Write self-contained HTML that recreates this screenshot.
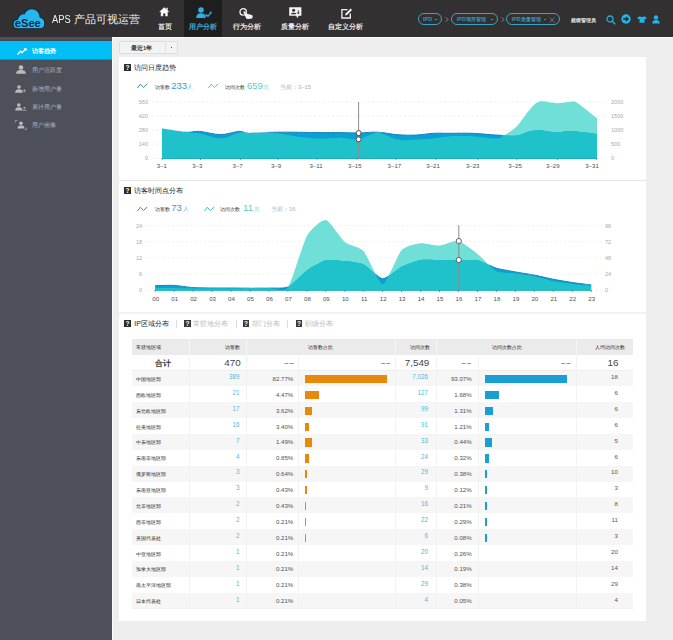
<!DOCTYPE html>
<html><head><meta charset="utf-8">
<style>
*{margin:0;padding:0;box-sizing:border-box}
html,body{width:673px;height:640px;overflow:hidden;background:#eeeeee;font-family:"Liberation Sans",sans-serif}
.abs{position:absolute}
#hdr{position:absolute;left:0;top:0;width:673px;height:36.7px;background:#323031}
#side{position:absolute;left:0;top:36.7px;width:112px;height:604px;background:#4d5058}
#mainbg{position:absolute;left:112px;top:36.7px;width:561px;height:604px;background:#eeeeee;border-left:1px solid #fafafa;border-top:1px solid #fafafa}
#panel{position:absolute;left:119px;top:57.3px;width:527px;height:563.7px;background:#fff}
.nav{position:absolute;top:0;height:36.7px;color:#e8e8e8;font-size:7px;text-align:center;font-weight:bold}
.nav .lb{position:absolute;left:0;right:0;top:22.5px;line-height:8px;white-space:nowrap}
.nav svg{position:absolute}
.pill{position:absolute;top:12.8px;height:12.3px;border:1.2px solid #3aa4c4;border-radius:7px;color:#3596b8;font-size:5.4px;line-height:9.7px;white-space:nowrap;font-weight:bold}
.dot{position:absolute;top:5px;width:1.6px;height:1.3px;background:#3a9cbc}
.si{position:absolute;left:0;width:112px;height:19px;color:#b4b6bb;font-size:6.3px;line-height:19px}
.si .t{position:absolute;left:32px;top:0}
.si svg{position:absolute}
.ttl{position:absolute;font-size:7px;color:#1e1e1e;line-height:9px;white-space:nowrap}
.qi{position:absolute;width:6.8px;height:6.8px;background:#2b2b2b;color:#fff;font-size:6.6px;font-weight:bold;line-height:7px;text-align:center}
.leg{position:absolute;font-size:5.2px;color:#333;white-space:nowrap;line-height:8px}
.big{position:absolute;font-size:9.5px;white-space:nowrap;line-height:10px}
.ax{position:absolute;font-size:5.6px;color:#aaaaaa;line-height:8px;white-space:nowrap}
.xl{position:absolute;font-size:6.1px;color:#505050;line-height:8px;white-space:nowrap}
.th{position:absolute;font-size:5.4px;color:#222;white-space:nowrap}
.tt{position:absolute;font-size:9.8px;color:#444;white-space:nowrap}
.tt.dash{font-size:7.2px;color:#333;letter-spacing:1.4px}
.tt.b{font-size:8.2px;color:#3a3a3a;font-weight:bold}
.td{position:absolute;font-size:5.35px;color:#1a1a1a;white-space:nowrap}
.tn{position:absolute;font-size:6.3px;color:#55b6da;white-space:nowrap}
.tp{position:absolute;font-size:6.1px;color:#505050;white-space:nowrap}
.ta{position:absolute;font-size:6.1px;color:#555;white-space:nowrap}
.tab{position:absolute;font-size:7px;line-height:9px;white-space:nowrap}
</style></head><body>
<div id="hdr">
  <!-- logo -->
  <svg class="abs" style="left:12px;top:8px" width="34" height="23" viewBox="0 0 34 23">
    <path d="M5.6,20.8 C2.8,20.8 1,18.6 1,16.2 C1,13.4 3,11.4 5.6,11.2 C6.2,7.6 9,5.6 12.4,5.6 C13.8,2.4 16.6,0.7 19.8,0.7 C24.6,0.7 28,4.2 28.2,9.2 C31,9.8 32.8,12.4 32.8,15.4 C32.8,18.6 30.6,20.8 27.6,20.8 Z" fill="#26b7ef" stroke="#10283c" stroke-width="1.1"/>
    <text x="15.8" y="18.6" text-anchor="middle" font-family="Liberation Sans" font-size="10.6" font-weight="bold" fill="#0f2c48" textLength="26" lengthAdjust="spacingAndGlyphs">eSee</text>
  </svg>
  <div class="abs" style="left:52.2px;top:12.5px;font-size:11px;line-height:12px;color:#f2f2f2;white-space:nowrap"><span style="display:inline-block;transform:scaleX(0.85);transform-origin:left;width:19px">APS</span> <span style="position:absolute;left:21.8px;top:0.3px;font-size:10.6px">产品可视运营</span></div>

  <div class="nav" style="left:152.5px;width:24px">
    <svg style="left:6.8px;top:7.4px" width="10.5" height="9.5" viewBox="0 0 10.5 9.5"><path d="M5.2,0.2 L10.3,5 L8.7,5 L8.7,9.3 L6.3,9.3 L6.3,6.5 L4.2,6.5 L4.2,9.3 L1.8,9.3 L1.8,5 L0.2,5 Z M7.3,0.8 L8.7,0.8 L8.7,3.4 L7.3,2.1 Z" fill="#f6f6f6"/></svg>
    <div class="lb">首页</div>
  </div>
  <div class="nav" style="left:184px;width:38px;background:#1e1e1e;color:#33aee0">
    <svg style="left:12px;top:7.4px" width="16" height="12" viewBox="0 0 16 12"><circle cx="5" cy="3" r="2.8" fill="#33aee0"/><path d="M0.3,11 C0.3,7.5 2.3,6.3 5,6.3 C7.2,6.3 8.5,7 9.2,8 L7.5,11 Z" fill="#33aee0"/><path d="M8,11 L10.5,8 L12,9.3 L14.8,5.8" stroke="#33aee0" stroke-width="1.3" fill="none"/><path d="M13.2,5 L15.6,4.6 L15.3,7 Z" fill="#33aee0"/></svg>
    <div class="lb">用户分析</div>
  </div>
  <div class="nav" style="left:228.4px;width:38px">
    <svg style="left:10.3px;top:7.8px" width="16" height="11" viewBox="0 0 16 11"><circle cx="4.2" cy="3.9" r="3.2" stroke="#f2f2f2" stroke-width="1.3" fill="none"/><path d="M4.6,3.6 C5.2,3 6,3.2 6.3,3.9 L7.6,6 C8.4,5.6 9.2,5.7 9.6,6.3 C10.4,6 11.2,6.2 11.5,6.8 C12.5,6.6 13.5,7.2 13.7,8.2 C13.9,9.3 13.2,10.6 12,10.8 L8.5,10.9 C7.8,10.9 7.3,10.6 7,10 L4.5,4.6 C4.3,4.2 4.3,3.9 4.6,3.6 Z" fill="#f2f2f2"/></svg>
    <div class="lb">行为分析</div>
  </div>
  <div class="nav" style="left:276px;width:38px">
    <svg style="left:12.8px;top:7.4px" width="13" height="12" viewBox="0 0 13 12"><path d="M0.2,0.2 L12.4,0.2 L12.4,8.8 L9.6,8.8 L8.4,11.2 L7.2,8.8 L0.2,8.8 Z" fill="#f4f4f4"/><circle cx="4.6" cy="3.3" r="1.5" fill="#323031"/><path d="M2,7.2 C2,5.3 7.2,5.3 7.2,7.2 Z" fill="#323031"/><path d="M9.3,3.3 L9.3,6.8 M8,5.6 L9.3,6.9 L10.6,5.6" stroke="#323031" stroke-width="0.9" fill="none"/></svg>
    <div class="lb">质量分析</div>
  </div>
  <div class="nav" style="left:327.5px;width:36px">
    <svg style="left:13px;top:8px" width="12" height="11" viewBox="0 0 12 11"><path d="M6.5,1.6 L0.9,1.6 L0.9,10 L9.3,10 L9.3,5.5" stroke="#f4f4f4" stroke-width="1.3" fill="none"/><path d="M4,7.4 L4.6,5.6 L9.6,0.6 L11,2 L6,7 Z" fill="#f4f4f4"/></svg>
    <div class="lb">自定义分析</div>
  </div>

  <div class="pill" style="left:417.9px;width:24.2px;"><span style="position:absolute;left:4.2px;top:1px">IPD</span><span class="dot" style="left:16.6px"></span></div>
  <svg class="abs" style="left:444.5px;top:17px" width="4" height="5" viewBox="0 0 4 5"><path d="M0.5,0.3 L3.3,2.5 L0.5,4.7" stroke="#8c8c8c" stroke-width="0.8" fill="none"/></svg>
  <div class="pill" style="left:451.3px;width:47px;"><span style="position:absolute;left:4.5px;top:1px">IPD项目管理</span><span class="dot" style="left:39px"></span></div>
  <svg class="abs" style="left:500.6px;top:17px" width="4" height="5" viewBox="0 0 4 5"><path d="M0.5,0.3 L3.3,2.5 L0.5,4.7" stroke="#8c8c8c" stroke-width="0.8" fill="none"/></svg>
  <div class="pill" style="left:506.2px;width:54.2px;"><span style="position:absolute;left:4.5px;top:1px">IPD质量管理</span><span class="dot" style="left:37px"></span><svg style="position:absolute;left:42.3px;top:3px" width="6" height="6" viewBox="0 0 6 6"><path d="M0.5,0.5 L5.5,5.5 M5.5,0.5 L0.5,5.5" stroke="#7a949c" stroke-width="0.65"/></svg></div>

  <div class="abs" style="left:571.3px;top:15.5px;font-size:5.2px;line-height:8px;color:#f0f0f0;font-weight:bold;white-space:nowrap">超级管理员</div>
  <svg class="abs" style="left:605.5px;top:14.5px" width="10" height="10" viewBox="0 0 10 10"><circle cx="4" cy="4" r="3" stroke="#2aa9dc" stroke-width="1.3" fill="none"/><path d="M6.2,6.2 L9.3,9.3" stroke="#2aa9dc" stroke-width="1.4"/></svg>
  <svg class="abs" style="left:621.4px;top:13.8px" width="10" height="10" viewBox="0 0 10 10"><circle cx="5" cy="5" r="4.7" fill="#22b4ec"/><path d="M2.2,5 L6,5 M4.8,3 L7,5 L4.8,7" stroke="#1e2b33" stroke-width="1.5" fill="none"/></svg>
  <svg class="abs" style="left:636.8px;top:15.6px" width="10" height="7" viewBox="0 0 10 7"><path d="M0.2,1.8 L3,0.2 L4,1 L6,1 L7,0.2 L9.8,1.8 L8.8,3.2 L7.5,2.8 L7.5,6.8 L2.5,6.8 L2.5,2.8 L1.2,3.2 Z" fill="#22b4ec"/></svg>
  <svg class="abs" style="left:651.8px;top:14.8px" width="8" height="9" viewBox="0 0 8 9"><circle cx="4" cy="2.4" r="2.2" fill="#22b4ec"/><path d="M0.2,8.6 C0.2,5.8 1.8,5 4,5 C6.2,5 7.8,5.8 7.8,8.6 Z" fill="#22b4ec"/></svg>
</div>

<div id="side">
  <div class="abs" style="left:0;top:3.3px;width:112px;height:0.8px;background:#3e4a55"></div>
  <div class="si" style="top:4px;background:#00bff7;color:#fff;height:19.3px">
    <svg style="left:16.5px;top:7.5px" width="10" height="7" viewBox="0 0 10 7"><path d="M0.5,6.5 L3.5,3.3 L5,4.8 L8.2,1.5" stroke="#fff" stroke-width="1.3" fill="none"/><path d="M6.5,0.3 L9.7,0.3 L9.7,3.3 Z" fill="#fff"/></svg>
    <div class="t" style="font-weight:bold">访客趋势</div>
  </div>
  <div class="abs" style="left:0;top:22.8px;width:112px;height:0.7px;background:#1992b8"></div>
  <div class="si" style="top:23.3px">
    <svg style="left:15.5px;top:5px" width="10" height="9" viewBox="0 0 10 9"><circle cx="5" cy="2.5" r="2.3" fill="#b9bbbf"/><path d="M0.2,8.8 C0.2,5.8 2,5 5,5 C8,5 9.8,5.8 9.8,8.8 Z" fill="#b9bbbf"/></svg>
    <div class="t">用户活跃度</div>
  </div>
  <div class="si" style="top:42px">
    <svg style="left:15px;top:6px" width="11" height="8" viewBox="0 0 11 8"><circle cx="4" cy="2" r="1.8" fill="#b9bbbf"/><path d="M0.2,7.8 C0.2,5 1.6,4.2 4,4.2 C6.4,4.2 7.8,5 7.8,7.8 Z" fill="#b9bbbf"/><path d="M9.3,4 L9.3,7.5 M7.8,5.8 L10.8,5.8" stroke="#b9bbbf" stroke-width="0.7"/></svg>
    <div class="t">新增用户量</div>
  </div>
  <div class="si" style="top:60.3px">
    <svg style="left:14.5px;top:6px" width="12" height="8" viewBox="0 0 12 8"><circle cx="3.8" cy="2" r="1.8" fill="#b9bbbf"/><path d="M0.2,7.6 C0.2,5 1.5,4.2 3.8,4.2 C6.1,4.2 7.4,5 7.4,7.6 Z" fill="#b9bbbf"/><rect x="8.6" y="4" width="1.6" height="1.6" fill="#b9bbbf"/><rect x="7.6" y="6.8" width="4" height="0.8" fill="#b9bbbf"/></svg>
    <div class="t">累计用户量</div>
  </div>
  <div class="si" style="top:78.8px">
    <svg style="left:14.5px;top:4.5px" width="12" height="10" viewBox="0 0 12 10"><path d="M0.5,2.5 L0.5,0.5 L2.5,0.5 M9.5,9.5 L11.5,9.5 L11.5,7.5" stroke="#b9bbbf" stroke-width="0.6" fill="none"/><circle cx="6" cy="3.3" r="1.8" fill="#b9bbbf"/><path d="M2.5,8.5 C2.5,6 4,5.5 6,5.5 C8,5.5 9.5,6 9.5,8.5 Z" fill="#b9bbbf"/></svg>
    <div class="t">用户画像</div>
  </div>
</div>

<div id="mainbg"></div>
<!-- dropdown -->
<div class="abs" style="left:119px;top:40.8px;width:59px;height:13.5px;background:#f3f3f3;border:0.8px solid #dedede;border-radius:2px"></div>
<div class="abs" style="left:165.3px;top:41.4px;width:0.8px;height:12.6px;background:#e2e2e2"></div>
<div class="abs" style="left:131px;top:44px;font-size:5.6px;line-height:8px;color:#333;white-space:nowrap;font-weight:bold">最近1年</div>
<div class="abs" style="left:170.8px;top:47.2px;width:1.6px;height:1.2px;background:#555"></div>

<div id="panel"></div>
<div class="abs" style="left:119px;top:180px;width:527px;height:0.8px;background:#e6e6e6"></div>
<div class="abs" style="left:119px;top:312.2px;width:527px;height:1.4px;background:#f1f1f1"></div>

<!-- titles -->
<div class="qi" style="left:124px;top:63.8px">?</div>
<div class="ttl" style="left:134px;top:62.5px">访问日度趋势</div>
<div class="qi" style="left:124px;top:187.2px">?</div>
<div class="ttl" style="left:134px;top:186px">访客时间点分布</div>

<!-- legends chart1 -->
<svg class="abs" style="left:137.3px;top:83px" width="11" height="6" viewBox="0 0 11 6"><path d="M0.5,5 L3.3,1.2 L6.5,4.5 L10.3,0.8" stroke="#3b8db6" stroke-width="1" fill="none"/></svg>
<div class="leg" style="left:154.5px;top:82.7px">访客数</div>
<div class="big" style="left:171.2px;top:80.6px;color:#3f9bc4">233</div>
<div class="leg" style="left:187.4px;top:82.7px;color:#78a6bf;font-size:5.5px">人</div>
<svg class="abs" style="left:207.5px;top:83px" width="11" height="6" viewBox="0 0 11 6"><path d="M0.5,5 L3.3,1.2 L6.5,4.5 L10.3,0.8" stroke="#45c6bd" stroke-width="1" fill="none"/></svg>
<div class="leg" style="left:225px;top:82.7px">访问次数</div>
<div class="big" style="left:247px;top:80.6px;color:#5ccbc2">659</div>
<div class="leg" style="left:263.4px;top:82.7px;color:#7fd0c8;font-size:5.5px">次</div>
<div class="leg" style="left:280px;top:82.6px;color:#b0b0b0;font-size:5.9px">当前：3–15</div>

<!-- legends chart2 -->
<svg class="abs" style="left:137px;top:206px" width="11" height="6" viewBox="0 0 11 6"><path d="M0.5,5 L3.3,1.2 L6.5,4.5 L10.3,0.8" stroke="#3b8db6" stroke-width="1" fill="none"/></svg>
<div class="leg" style="left:154.8px;top:205.4px">访客数</div>
<div class="big" style="left:171.2px;top:203.4px;color:#3f9bc4">73</div>
<div class="leg" style="left:182.8px;top:205.4px;color:#78a6bf;font-size:5.5px">人</div>
<svg class="abs" style="left:203.8px;top:206px" width="11" height="6" viewBox="0 0 11 6"><path d="M0.5,5 L3.3,1.2 L6.5,4.5 L10.3,0.8" stroke="#45c6bd" stroke-width="1" fill="none"/></svg>
<div class="leg" style="left:220.3px;top:205.4px">访问次数</div>
<div class="big" style="left:243.1px;top:203.4px;color:#5ccbc2">11</div>
<div class="leg" style="left:254px;top:205.4px;color:#7fd0c8;font-size:5.5px">次</div>
<div class="leg" style="left:271px;top:205.3px;color:#b0b0b0;font-size:5.9px">当前：16</div>

<svg class="abs" style="left:0;top:0" width="673" height="640" viewBox="0 0 673 640">
<line x1="152" y1="102" x2="607" y2="102" stroke="#ececec" stroke-width="0.9" stroke-dasharray="2,2.5"/><line x1="152" y1="116" x2="607" y2="116" stroke="#ececec" stroke-width="0.9" stroke-dasharray="2,2.5"/><line x1="152" y1="130" x2="607" y2="130" stroke="#ececec" stroke-width="0.9" stroke-dasharray="2,2.5"/><line x1="152" y1="144" x2="607" y2="144" stroke="#ececec" stroke-width="0.9" stroke-dasharray="2,2.5"/><line x1="152" y1="158.5" x2="607" y2="158.5" stroke="#ececec" stroke-width="0.9" stroke-dasharray="2,2.5"/>
<clipPath id="cl1"><path d="M162.0,128.8 C166.0,129.4 179.7,131.9 186.0,132.3 C192.3,132.7 193.8,131.0 199.6,131.4 C205.3,131.8 214.0,134.6 220.5,134.6 C227.0,134.6 233.9,131.7 238.6,131.4 C243.3,131.1 242.5,132.8 248.6,132.9 C254.7,133.0 266.4,132.3 275.0,132.2 C283.6,132.1 292.5,132.2 300.0,132.3 C307.5,132.4 313.3,132.6 320.0,132.6 C326.7,132.6 333.6,132.5 340.0,132.6 C346.4,132.7 352.1,133.1 358.4,133.0 C364.7,132.9 371.4,131.9 378.0,132.2 C384.6,132.5 391.7,134.3 398.0,134.8 C404.3,135.3 410.1,135.3 416.0,135.1 C421.9,134.8 428.0,133.6 433.7,133.3 C439.4,133.0 443.6,133.3 450.0,133.3 C456.4,133.3 464.5,133.0 472.3,133.3 C480.1,133.6 489.4,134.7 496.8,135.1 C504.2,135.5 511.7,136.1 516.9,135.6 C522.1,135.1 524.3,132.7 528.0,131.8 C531.7,130.9 534.2,130.1 539.0,130.2 C543.8,130.3 551.8,132.2 557.0,132.4 C562.2,132.6 563.6,130.8 570.3,131.1 C577.0,131.4 592.5,133.5 597.0,134.0 L597.0,158.5 L162.0,158.5 Z"/></clipPath>
<path d="M162.0,128.8 C166.0,129.4 179.7,131.7 186.0,132.5 C192.3,133.3 193.8,132.4 199.6,133.4 C205.3,134.4 214.0,138.4 220.5,138.3 C227.0,138.2 233.9,133.8 238.6,132.9 C243.3,132.0 242.5,132.8 248.6,132.9 C254.7,133.0 266.4,132.6 275.0,133.3 C283.6,134.0 292.5,136.1 300.0,137.0 C307.5,137.9 313.3,138.5 320.0,138.6 C326.7,138.7 333.6,137.7 340.0,137.8 C346.4,137.9 352.1,139.8 358.4,139.0 C364.7,138.2 371.4,132.8 378.0,132.9 C384.6,133.0 391.7,138.5 398.0,139.6 C404.3,140.7 410.1,139.8 416.0,139.6 C421.9,139.4 428.0,139.1 433.7,138.5 C439.4,137.9 443.6,136.6 450.0,136.2 C456.4,135.8 464.5,135.8 472.3,136.2 C480.1,136.6 491.6,138.6 496.8,138.5 C502.0,138.4 500.1,137.9 503.5,135.8 C506.9,133.8 512.8,130.2 516.9,126.2 C521.0,122.2 524.3,115.8 528.0,111.7 C531.7,107.6 534.2,103.1 539.0,101.7 C543.8,100.3 551.8,103.2 557.0,103.2 C562.2,103.2 567.0,101.8 570.3,101.7 C573.6,101.6 572.5,100.0 577.0,102.8 C581.5,105.6 593.7,115.8 597.0,118.4 L597.0,158.5 L162.0,158.5 Z" fill="#70dfd8"/>
<path d="M162.0,128.8 C166.0,129.4 179.7,131.9 186.0,132.3 C192.3,132.7 193.8,131.0 199.6,131.4 C205.3,131.8 214.0,134.6 220.5,134.6 C227.0,134.6 233.9,131.7 238.6,131.4 C243.3,131.1 242.5,132.8 248.6,132.9 C254.7,133.0 266.4,132.3 275.0,132.2 C283.6,132.1 292.5,132.2 300.0,132.3 C307.5,132.4 313.3,132.6 320.0,132.6 C326.7,132.6 333.6,132.5 340.0,132.6 C346.4,132.7 352.1,133.1 358.4,133.0 C364.7,132.9 371.4,131.9 378.0,132.2 C384.6,132.5 391.7,134.3 398.0,134.8 C404.3,135.3 410.1,135.3 416.0,135.1 C421.9,134.8 428.0,133.6 433.7,133.3 C439.4,133.0 443.6,133.3 450.0,133.3 C456.4,133.3 464.5,133.0 472.3,133.3 C480.1,133.6 489.4,134.7 496.8,135.1 C504.2,135.5 511.7,136.1 516.9,135.6 C522.1,135.1 524.3,132.7 528.0,131.8 C531.7,130.9 534.2,130.1 539.0,130.2 C543.8,130.3 551.8,132.2 557.0,132.4 C562.2,132.6 563.6,130.8 570.3,131.1 C577.0,131.4 592.5,133.5 597.0,134.0 L597.0,158.5 L162.0,158.5 Z" fill="#08a0d6"/>
<path d="M162.0,128.8 C166.0,129.4 179.7,131.7 186.0,132.5 C192.3,133.3 193.8,132.4 199.6,133.4 C205.3,134.4 214.0,138.4 220.5,138.3 C227.0,138.2 233.9,133.8 238.6,132.9 C243.3,132.0 242.5,132.8 248.6,132.9 C254.7,133.0 266.4,132.6 275.0,133.3 C283.6,134.0 292.5,136.1 300.0,137.0 C307.5,137.9 313.3,138.5 320.0,138.6 C326.7,138.7 333.6,137.7 340.0,137.8 C346.4,137.9 352.1,139.8 358.4,139.0 C364.7,138.2 371.4,132.8 378.0,132.9 C384.6,133.0 391.7,138.5 398.0,139.6 C404.3,140.7 410.1,139.8 416.0,139.6 C421.9,139.4 428.0,139.1 433.7,138.5 C439.4,137.9 443.6,136.6 450.0,136.2 C456.4,135.8 464.5,135.8 472.3,136.2 C480.1,136.6 491.6,138.6 496.8,138.5 C502.0,138.4 500.1,137.9 503.5,135.8 C506.9,133.8 512.8,130.2 516.9,126.2 C521.0,122.2 524.3,115.8 528.0,111.7 C531.7,107.6 534.2,103.1 539.0,101.7 C543.8,100.3 551.8,103.2 557.0,103.2 C562.2,103.2 567.0,101.8 570.3,101.7 C573.6,101.6 572.5,100.0 577.0,102.8 C581.5,105.6 593.7,115.8 597.0,118.4 L597.0,158.5 L162.0,158.5 Z" fill="#1fc2cb" clip-path="url(#cl1)"/>
<mask id="mk1"><rect x="0" y="0" width="673" height="640" fill="#fff"/><path d="M162.0,128.8 C166.0,129.4 179.7,131.7 186.0,132.5 C192.3,133.3 193.8,132.4 199.6,133.4 C205.3,134.4 214.0,138.4 220.5,138.3 C227.0,138.2 233.9,133.8 238.6,132.9 C243.3,132.0 242.5,132.8 248.6,132.9 C254.7,133.0 266.4,132.6 275.0,133.3 C283.6,134.0 292.5,136.1 300.0,137.0 C307.5,137.9 313.3,138.5 320.0,138.6 C326.7,138.7 333.6,137.7 340.0,137.8 C346.4,137.9 352.1,139.8 358.4,139.0 C364.7,138.2 371.4,132.8 378.0,132.9 C384.6,133.0 391.7,138.5 398.0,139.6 C404.3,140.7 410.1,139.8 416.0,139.6 C421.9,139.4 428.0,139.1 433.7,138.5 C439.4,137.9 443.6,136.6 450.0,136.2 C456.4,135.8 464.5,135.8 472.3,136.2 C480.1,136.6 491.6,138.6 496.8,138.5 C502.0,138.4 500.1,137.9 503.5,135.8 C506.9,133.8 512.8,130.2 516.9,126.2 C521.0,122.2 524.3,115.8 528.0,111.7 C531.7,107.6 534.2,103.1 539.0,101.7 C543.8,100.3 551.8,103.2 557.0,103.2 C562.2,103.2 567.0,101.8 570.3,101.7 C573.6,101.6 572.5,100.0 577.0,102.8 C581.5,105.6 593.7,115.8 597.0,118.4 L597.0,158.5 L162.0,158.5 Z" fill="#000" transform="translate(0,-0.6)"/></mask>
<path d="M162.0,128.8 C166.0,129.4 179.7,131.9 186.0,132.3 C192.3,132.7 193.8,131.0 199.6,131.4 C205.3,131.8 214.0,134.6 220.5,134.6 C227.0,134.6 233.9,131.7 238.6,131.4 C243.3,131.1 242.5,132.8 248.6,132.9 C254.7,133.0 266.4,132.3 275.0,132.2 C283.6,132.1 292.5,132.2 300.0,132.3 C307.5,132.4 313.3,132.6 320.0,132.6 C326.7,132.6 333.6,132.5 340.0,132.6 C346.4,132.7 352.1,133.1 358.4,133.0 C364.7,132.9 371.4,131.9 378.0,132.2 C384.6,132.5 391.7,134.3 398.0,134.8 C404.3,135.3 410.1,135.3 416.0,135.1 C421.9,134.8 428.0,133.6 433.7,133.3 C439.4,133.0 443.6,133.3 450.0,133.3 C456.4,133.3 464.5,133.0 472.3,133.3 C480.1,133.6 489.4,134.7 496.8,135.1 C504.2,135.5 511.7,136.1 516.9,135.6 C522.1,135.1 524.3,132.7 528.0,131.8 C531.7,130.9 534.2,130.1 539.0,130.2 C543.8,130.3 551.8,132.2 557.0,132.4 C562.2,132.6 563.6,130.8 570.3,131.1 C577.0,131.4 592.5,133.5 597.0,134.0" fill="none" stroke="#1684b8" stroke-width="1" mask="url(#mk1)"/>
<line x1="162" y1="158.5" x2="597" y2="158.5" stroke="#17b4bd" stroke-width="1"/>
<line x1="162.2" y1="158" x2="162.2" y2="160" stroke="#3a8aa0" stroke-width="0.8"/>
<line x1="200.5" y1="158" x2="200.5" y2="160" stroke="#3a8aa0" stroke-width="0.8"/>
<line x1="240.6" y1="158" x2="240.6" y2="160" stroke="#3a8aa0" stroke-width="0.8"/>
<line x1="278" y1="158" x2="278" y2="160" stroke="#3a8aa0" stroke-width="0.8"/>
<line x1="317" y1="158" x2="317" y2="160" stroke="#3a8aa0" stroke-width="0.8"/>
<line x1="357" y1="158" x2="357" y2="160" stroke="#3a8aa0" stroke-width="0.8"/>
<line x1="396" y1="158" x2="396" y2="160" stroke="#3a8aa0" stroke-width="0.8"/>
<line x1="436" y1="158" x2="436" y2="160" stroke="#3a8aa0" stroke-width="0.8"/>
<line x1="477.9" y1="158" x2="477.9" y2="160" stroke="#3a8aa0" stroke-width="0.8"/>
<line x1="516.9" y1="158" x2="516.9" y2="160" stroke="#3a8aa0" stroke-width="0.8"/>
<line x1="557.4" y1="158" x2="557.4" y2="160" stroke="#3a8aa0" stroke-width="0.8"/>
<line x1="596.6" y1="158" x2="596.6" y2="160" stroke="#3a8aa0" stroke-width="0.8"/>
<line x1="358.6" y1="102" x2="358.6" y2="158" stroke="#8e8e8e" stroke-width="1"/>
<circle cx="358.6" cy="133.1" r="2.5" fill="#fff" stroke="#4a4a4a" stroke-width="1"/>
<circle cx="358.6" cy="139.3" r="2.5" fill="#fff" stroke="#4a4a4a" stroke-width="1"/>
<line x1="145.3" y1="225.6" x2="601.5" y2="225.6" stroke="#ececec" stroke-width="0.9" stroke-dasharray="2,2.5"/><line x1="145.3" y1="241.7" x2="601.5" y2="241.7" stroke="#ececec" stroke-width="0.9" stroke-dasharray="2,2.5"/><line x1="145.3" y1="257.8" x2="601.5" y2="257.8" stroke="#ececec" stroke-width="0.9" stroke-dasharray="2,2.5"/><line x1="145.3" y1="273.9" x2="601.5" y2="273.9" stroke="#ececec" stroke-width="0.9" stroke-dasharray="2,2.5"/><line x1="145.3" y1="290.3" x2="601.5" y2="290.3" stroke="#ececec" stroke-width="0.9" stroke-dasharray="2,2.5"/>
<clipPath id="cl2"><path d="M155.2,285.6 C157.1,285.6 170.4,285.2 174.2,285.4 C177.9,285.6 189.3,287.3 193.1,287.6 C196.9,287.9 208.3,288.0 212.1,288.0 C215.9,288.0 227.2,288.0 231.0,288.0 C234.8,288.0 246.2,288.2 250.0,288.2 C253.8,288.2 265.1,288.1 268.9,288.0 C272.7,287.9 284.1,288.8 287.9,287.0 C291.7,285.2 303.1,273.1 306.9,270.4 C310.6,267.7 322.0,261.1 325.8,260.2 C329.6,259.3 341.0,260.7 344.8,261.1 C348.6,261.5 359.9,262.8 363.7,264.6 C367.5,266.4 378.9,278.6 382.7,278.8 C386.5,279.0 397.8,268.7 401.6,266.8 C405.4,264.9 416.8,260.8 420.6,260.1 C424.4,259.4 435.8,260.2 439.5,260.2 C443.3,260.2 454.7,260.2 458.5,260.2 C462.3,260.2 473.7,259.5 477.5,260.3 C481.3,261.1 492.6,267.0 496.4,268.2 C500.2,269.4 511.6,271.2 515.4,271.9 C519.2,272.6 530.5,274.4 534.3,275.1 C538.1,275.8 549.5,278.6 553.3,279.3 C557.1,280.0 568.5,281.9 572.2,282.5 C576.0,283.1 589.3,284.7 591.2,284.9 L591.2,290.3 L155.2,290.3 Z"/></clipPath>
<path d="M155.2,288.1 C157.1,288.1 170.4,288.0 174.2,288.0 C177.9,288.0 189.3,288.4 193.1,288.5 C196.9,288.6 208.3,288.5 212.1,288.5 C215.9,288.5 227.2,288.5 231.0,288.5 C234.8,288.5 246.2,288.5 250.0,288.5 C253.8,288.5 265.1,288.4 268.9,288.3 C272.7,288.2 284.1,292.7 287.9,287.5 C291.7,282.3 303.1,242.7 306.9,235.9 C310.6,229.2 322.0,219.4 325.8,220.0 C329.6,220.6 341.0,238.8 344.8,241.9 C348.6,245.0 359.9,247.0 363.7,251.2 C367.5,255.4 378.9,284.4 382.7,284.3 C386.5,284.2 397.8,254.2 401.6,250.1 C405.4,246.0 416.8,243.6 420.6,243.2 C424.4,242.8 435.8,245.8 439.5,245.6 C443.3,245.4 454.7,240.1 458.5,240.9 C462.3,241.7 473.7,250.9 477.5,253.9 C481.3,256.9 492.6,269.4 496.4,271.3 C500.2,273.2 511.6,272.9 515.4,273.4 C519.2,273.9 530.5,275.4 534.3,276.2 C538.1,277.0 549.5,280.5 553.3,281.3 C557.1,282.1 568.5,283.4 572.2,283.9 C576.0,284.3 589.3,285.6 591.2,285.8 L591.2,290.3 L155.2,290.3 Z" fill="#70dfd8"/>
<path d="M155.2,285.6 C157.1,285.6 170.4,285.2 174.2,285.4 C177.9,285.6 189.3,287.3 193.1,287.6 C196.9,287.9 208.3,288.0 212.1,288.0 C215.9,288.0 227.2,288.0 231.0,288.0 C234.8,288.0 246.2,288.2 250.0,288.2 C253.8,288.2 265.1,288.1 268.9,288.0 C272.7,287.9 284.1,288.8 287.9,287.0 C291.7,285.2 303.1,273.1 306.9,270.4 C310.6,267.7 322.0,261.1 325.8,260.2 C329.6,259.3 341.0,260.7 344.8,261.1 C348.6,261.5 359.9,262.8 363.7,264.6 C367.5,266.4 378.9,278.6 382.7,278.8 C386.5,279.0 397.8,268.7 401.6,266.8 C405.4,264.9 416.8,260.8 420.6,260.1 C424.4,259.4 435.8,260.2 439.5,260.2 C443.3,260.2 454.7,260.2 458.5,260.2 C462.3,260.2 473.7,259.5 477.5,260.3 C481.3,261.1 492.6,267.0 496.4,268.2 C500.2,269.4 511.6,271.2 515.4,271.9 C519.2,272.6 530.5,274.4 534.3,275.1 C538.1,275.8 549.5,278.6 553.3,279.3 C557.1,280.0 568.5,281.9 572.2,282.5 C576.0,283.1 589.3,284.7 591.2,284.9 L591.2,290.3 L155.2,290.3 Z" fill="#08a0d6"/>
<path d="M155.2,288.1 C157.1,288.1 170.4,288.0 174.2,288.0 C177.9,288.0 189.3,288.4 193.1,288.5 C196.9,288.6 208.3,288.5 212.1,288.5 C215.9,288.5 227.2,288.5 231.0,288.5 C234.8,288.5 246.2,288.5 250.0,288.5 C253.8,288.5 265.1,288.4 268.9,288.3 C272.7,288.2 284.1,292.7 287.9,287.5 C291.7,282.3 303.1,242.7 306.9,235.9 C310.6,229.2 322.0,219.4 325.8,220.0 C329.6,220.6 341.0,238.8 344.8,241.9 C348.6,245.0 359.9,247.0 363.7,251.2 C367.5,255.4 378.9,284.4 382.7,284.3 C386.5,284.2 397.8,254.2 401.6,250.1 C405.4,246.0 416.8,243.6 420.6,243.2 C424.4,242.8 435.8,245.8 439.5,245.6 C443.3,245.4 454.7,240.1 458.5,240.9 C462.3,241.7 473.7,250.9 477.5,253.9 C481.3,256.9 492.6,269.4 496.4,271.3 C500.2,273.2 511.6,272.9 515.4,273.4 C519.2,273.9 530.5,275.4 534.3,276.2 C538.1,277.0 549.5,280.5 553.3,281.3 C557.1,282.1 568.5,283.4 572.2,283.9 C576.0,284.3 589.3,285.6 591.2,285.8 L591.2,290.3 L155.2,290.3 Z" fill="#1fc2cb" clip-path="url(#cl2)"/>
<mask id="mk2"><rect x="0" y="0" width="673" height="640" fill="#fff"/><path d="M155.2,288.1 C157.1,288.1 170.4,288.0 174.2,288.0 C177.9,288.0 189.3,288.4 193.1,288.5 C196.9,288.6 208.3,288.5 212.1,288.5 C215.9,288.5 227.2,288.5 231.0,288.5 C234.8,288.5 246.2,288.5 250.0,288.5 C253.8,288.5 265.1,288.4 268.9,288.3 C272.7,288.2 284.1,292.7 287.9,287.5 C291.7,282.3 303.1,242.7 306.9,235.9 C310.6,229.2 322.0,219.4 325.8,220.0 C329.6,220.6 341.0,238.8 344.8,241.9 C348.6,245.0 359.9,247.0 363.7,251.2 C367.5,255.4 378.9,284.4 382.7,284.3 C386.5,284.2 397.8,254.2 401.6,250.1 C405.4,246.0 416.8,243.6 420.6,243.2 C424.4,242.8 435.8,245.8 439.5,245.6 C443.3,245.4 454.7,240.1 458.5,240.9 C462.3,241.7 473.7,250.9 477.5,253.9 C481.3,256.9 492.6,269.4 496.4,271.3 C500.2,273.2 511.6,272.9 515.4,273.4 C519.2,273.9 530.5,275.4 534.3,276.2 C538.1,277.0 549.5,280.5 553.3,281.3 C557.1,282.1 568.5,283.4 572.2,283.9 C576.0,284.3 589.3,285.6 591.2,285.8 L591.2,290.3 L155.2,290.3 Z" fill="#000" transform="translate(0,-0.6)"/></mask>
<path d="M155.2,285.6 C157.1,285.6 170.4,285.2 174.2,285.4 C177.9,285.6 189.3,287.3 193.1,287.6 C196.9,287.9 208.3,288.0 212.1,288.0 C215.9,288.0 227.2,288.0 231.0,288.0 C234.8,288.0 246.2,288.2 250.0,288.2 C253.8,288.2 265.1,288.1 268.9,288.0 C272.7,287.9 284.1,288.8 287.9,287.0 C291.7,285.2 303.1,273.1 306.9,270.4 C310.6,267.7 322.0,261.1 325.8,260.2 C329.6,259.3 341.0,260.7 344.8,261.1 C348.6,261.5 359.9,262.8 363.7,264.6 C367.5,266.4 378.9,278.6 382.7,278.8 C386.5,279.0 397.8,268.7 401.6,266.8 C405.4,264.9 416.8,260.8 420.6,260.1 C424.4,259.4 435.8,260.2 439.5,260.2 C443.3,260.2 454.7,260.2 458.5,260.2 C462.3,260.2 473.7,259.5 477.5,260.3 C481.3,261.1 492.6,267.0 496.4,268.2 C500.2,269.4 511.6,271.2 515.4,271.9 C519.2,272.6 530.5,274.4 534.3,275.1 C538.1,275.8 549.5,278.6 553.3,279.3 C557.1,280.0 568.5,281.9 572.2,282.5 C576.0,283.1 589.3,284.7 591.2,284.9" fill="none" stroke="#1684b8" stroke-width="1" mask="url(#mk2)"/>
<line x1="155.2" y1="290.3" x2="591.2" y2="290.3" stroke="#17b4bd" stroke-width="1"/>
<line x1="155.2" y1="290" x2="155.2" y2="292" stroke="#3a8aa0" stroke-width="0.8"/>
<line x1="174.2" y1="290" x2="174.2" y2="292" stroke="#3a8aa0" stroke-width="0.8"/>
<line x1="193.1" y1="290" x2="193.1" y2="292" stroke="#3a8aa0" stroke-width="0.8"/>
<line x1="212.1" y1="290" x2="212.1" y2="292" stroke="#3a8aa0" stroke-width="0.8"/>
<line x1="231.0" y1="290" x2="231.0" y2="292" stroke="#3a8aa0" stroke-width="0.8"/>
<line x1="250.0" y1="290" x2="250.0" y2="292" stroke="#3a8aa0" stroke-width="0.8"/>
<line x1="268.9" y1="290" x2="268.9" y2="292" stroke="#3a8aa0" stroke-width="0.8"/>
<line x1="287.9" y1="290" x2="287.9" y2="292" stroke="#3a8aa0" stroke-width="0.8"/>
<line x1="306.9" y1="290" x2="306.9" y2="292" stroke="#3a8aa0" stroke-width="0.8"/>
<line x1="325.8" y1="290" x2="325.8" y2="292" stroke="#3a8aa0" stroke-width="0.8"/>
<line x1="344.8" y1="290" x2="344.8" y2="292" stroke="#3a8aa0" stroke-width="0.8"/>
<line x1="363.7" y1="290" x2="363.7" y2="292" stroke="#3a8aa0" stroke-width="0.8"/>
<line x1="382.7" y1="290" x2="382.7" y2="292" stroke="#3a8aa0" stroke-width="0.8"/>
<line x1="401.6" y1="290" x2="401.6" y2="292" stroke="#3a8aa0" stroke-width="0.8"/>
<line x1="420.6" y1="290" x2="420.6" y2="292" stroke="#3a8aa0" stroke-width="0.8"/>
<line x1="439.5" y1="290" x2="439.5" y2="292" stroke="#3a8aa0" stroke-width="0.8"/>
<line x1="458.5" y1="290" x2="458.5" y2="292" stroke="#3a8aa0" stroke-width="0.8"/>
<line x1="477.5" y1="290" x2="477.5" y2="292" stroke="#3a8aa0" stroke-width="0.8"/>
<line x1="496.4" y1="290" x2="496.4" y2="292" stroke="#3a8aa0" stroke-width="0.8"/>
<line x1="515.4" y1="290" x2="515.4" y2="292" stroke="#3a8aa0" stroke-width="0.8"/>
<line x1="534.3" y1="290" x2="534.3" y2="292" stroke="#3a8aa0" stroke-width="0.8"/>
<line x1="553.3" y1="290" x2="553.3" y2="292" stroke="#3a8aa0" stroke-width="0.8"/>
<line x1="572.2" y1="290" x2="572.2" y2="292" stroke="#3a8aa0" stroke-width="0.8"/>
<line x1="591.2" y1="290" x2="591.2" y2="292" stroke="#3a8aa0" stroke-width="0.8"/>
<line x1="458.8" y1="225.2" x2="458.8" y2="290" stroke="#8a8a8a" stroke-width="1"/>
<circle cx="458.8" cy="241" r="2.6" fill="#fff" stroke="#555" stroke-width="0.9"/>
<circle cx="458.8" cy="260" r="2.6" fill="#fff" stroke="#555" stroke-width="0.9"/>
</svg>
<div class="ax" style="left:108.0px;top:98.0px;width:40px;text-align:right">560</div>
<div class="ax" style="left:108.0px;top:112.0px;width:40px;text-align:right">420</div>
<div class="ax" style="left:108.0px;top:126.0px;width:40px;text-align:right">280</div>
<div class="ax" style="left:108.0px;top:140.0px;width:40px;text-align:right">140</div>
<div class="ax" style="left:108.0px;top:154.0px;width:40px;text-align:right">0</div>
<div class="ax" style="left:611.0px;top:98.0px">2000</div>
<div class="ax" style="left:611.0px;top:112.0px">1500</div>
<div class="ax" style="left:611.0px;top:126.0px">1000</div>
<div class="ax" style="left:611.0px;top:140.0px">500</div>
<div class="ax" style="left:611.0px;top:154.0px">0</div>
<div class="xl" style="left:141.9px;top:161.8px;width:40px;text-align:center">3–1</div>
<div class="xl" style="left:177.3px;top:161.8px;width:40px;text-align:center">3–3</div>
<div class="xl" style="left:217.7px;top:161.8px;width:40px;text-align:center">3–7</div>
<div class="xl" style="left:256.0px;top:161.8px;width:40px;text-align:center">3–9</div>
<div class="xl" style="left:296.0px;top:161.8px;width:40px;text-align:center">3–11</div>
<div class="xl" style="left:334.8px;top:161.8px;width:40px;text-align:center">3–15</div>
<div class="xl" style="left:374.4px;top:161.8px;width:40px;text-align:center">3–17</div>
<div class="xl" style="left:413.0px;top:161.8px;width:40px;text-align:center">3–21</div>
<div class="xl" style="left:452.7px;top:161.8px;width:40px;text-align:center">3–23</div>
<div class="xl" style="left:495.0px;top:161.8px;width:40px;text-align:center">3–25</div>
<div class="xl" style="left:532.8px;top:161.8px;width:40px;text-align:center">3–29</div>
<div class="xl" style="left:572.0px;top:161.8px;width:40px;text-align:center">3–31</div>
<div class="ax" style="left:102.2px;top:221.6px;width:40px;text-align:right">24</div>
<div class="ax" style="left:102.2px;top:237.7px;width:40px;text-align:right">18</div>
<div class="ax" style="left:102.2px;top:253.8px;width:40px;text-align:right">12</div>
<div class="ax" style="left:102.2px;top:269.9px;width:40px;text-align:right">6</div>
<div class="ax" style="left:102.2px;top:286.3px;width:40px;text-align:right">0</div>
<div class="ax" style="left:605.0px;top:221.6px">96</div>
<div class="ax" style="left:605.0px;top:237.7px">72</div>
<div class="ax" style="left:605.0px;top:253.8px">48</div>
<div class="ax" style="left:605.0px;top:269.9px">24</div>
<div class="ax" style="left:605.0px;top:286.3px">0</div>
<div class="xl" style="left:135.7px;top:294.8px;width:40px;text-align:center">00</div>
<div class="xl" style="left:154.7px;top:294.8px;width:40px;text-align:center">01</div>
<div class="xl" style="left:173.6px;top:294.8px;width:40px;text-align:center">02</div>
<div class="xl" style="left:192.6px;top:294.8px;width:40px;text-align:center">03</div>
<div class="xl" style="left:211.5px;top:294.8px;width:40px;text-align:center">04</div>
<div class="xl" style="left:230.5px;top:294.8px;width:40px;text-align:center">05</div>
<div class="xl" style="left:249.4px;top:294.8px;width:40px;text-align:center">06</div>
<div class="xl" style="left:268.4px;top:294.8px;width:40px;text-align:center">07</div>
<div class="xl" style="left:287.4px;top:294.8px;width:40px;text-align:center">08</div>
<div class="xl" style="left:306.3px;top:294.8px;width:40px;text-align:center">09</div>
<div class="xl" style="left:325.3px;top:294.8px;width:40px;text-align:center">10</div>
<div class="xl" style="left:344.2px;top:294.8px;width:40px;text-align:center">11</div>
<div class="xl" style="left:363.2px;top:294.8px;width:40px;text-align:center">12</div>
<div class="xl" style="left:382.1px;top:294.8px;width:40px;text-align:center">13</div>
<div class="xl" style="left:401.1px;top:294.8px;width:40px;text-align:center">14</div>
<div class="xl" style="left:420.0px;top:294.8px;width:40px;text-align:center">15</div>
<div class="xl" style="left:439.0px;top:294.8px;width:40px;text-align:center">16</div>
<div class="xl" style="left:458.0px;top:294.8px;width:40px;text-align:center">17</div>
<div class="xl" style="left:476.9px;top:294.8px;width:40px;text-align:center">18</div>
<div class="xl" style="left:495.9px;top:294.8px;width:40px;text-align:center">19</div>
<div class="xl" style="left:514.8px;top:294.8px;width:40px;text-align:center">20</div>
<div class="xl" style="left:533.8px;top:294.8px;width:40px;text-align:center">21</div>
<div class="xl" style="left:552.7px;top:294.8px;width:40px;text-align:center">22</div>
<div class="xl" style="left:571.7px;top:294.8px;width:40px;text-align:center">23</div>

<!-- tabs -->
<div class="qi" style="left:124px;top:320.2px">?</div>
<div class="tab" style="left:134.3px;top:319px;color:#1e1e1e">IP区域分布</div>
<div class="abs" style="left:176.3px;top:319.5px;width:0.7px;height:8px;background:#ddd"></div>
<div class="qi" style="left:184px;top:320.2px;background:#3a3a3a">?</div>
<div class="tab" style="left:193px;top:319px;color:#b8b8b8">常驻地分布</div>
<div class="abs" style="left:235.5px;top:319.5px;width:0.7px;height:8px;background:#ddd"></div>
<div class="qi" style="left:242.5px;top:320.2px;background:#3a3a3a">?</div>
<div class="tab" style="left:252.3px;top:319px;color:#b8b8b8">部门分布</div>
<div class="abs" style="left:287.2px;top:319.5px;width:0.7px;height:8px;background:#ddd"></div>
<div class="qi" style="left:295.5px;top:320.2px;background:#3a3a3a">?</div>
<div class="tab" style="left:304.9px;top:319px;color:#b8b8b8">职级分布</div>

<div class="abs" style="left:132.2px;top:339.2px;width:500.59999999999997px;height:15.6px;background:#ebebeb"></div>
<div class="abs" style="left:189.0px;top:339.2px;width:1px;height:15.6px;background:#f6f6f6"></div>
<div class="abs" style="left:246.0px;top:339.2px;width:1px;height:15.6px;background:#f6f6f6"></div>
<div class="abs" style="left:394.6px;top:339.2px;width:1px;height:15.6px;background:#f6f6f6"></div>
<div class="abs" style="left:436.4px;top:339.2px;width:1px;height:15.6px;background:#f6f6f6"></div>
<div class="abs" style="left:576.1px;top:339.2px;width:1px;height:15.6px;background:#f6f6f6"></div>
<div class="abs" style="left:132.2px;top:370.40px;width:500.59999999999997px;height:15.88px;background:#f6f6f6"></div>
<div class="abs" style="left:132.2px;top:386.28px;width:500.59999999999997px;height:15.88px;background:#ffffff"></div>
<div class="abs" style="left:132.2px;top:402.16px;width:500.59999999999997px;height:15.88px;background:#f6f6f6"></div>
<div class="abs" style="left:132.2px;top:418.04px;width:500.59999999999997px;height:15.88px;background:#ffffff"></div>
<div class="abs" style="left:132.2px;top:433.92px;width:500.59999999999997px;height:15.88px;background:#f6f6f6"></div>
<div class="abs" style="left:132.2px;top:449.80px;width:500.59999999999997px;height:15.88px;background:#ffffff"></div>
<div class="abs" style="left:132.2px;top:465.68px;width:500.59999999999997px;height:15.88px;background:#f6f6f6"></div>
<div class="abs" style="left:132.2px;top:481.56px;width:500.59999999999997px;height:15.88px;background:#ffffff"></div>
<div class="abs" style="left:132.2px;top:497.44px;width:500.59999999999997px;height:15.88px;background:#f6f6f6"></div>
<div class="abs" style="left:132.2px;top:513.32px;width:500.59999999999997px;height:15.88px;background:#ffffff"></div>
<div class="abs" style="left:132.2px;top:529.20px;width:500.59999999999997px;height:15.88px;background:#f6f6f6"></div>
<div class="abs" style="left:132.2px;top:545.08px;width:500.59999999999997px;height:15.88px;background:#ffffff"></div>
<div class="abs" style="left:132.2px;top:560.96px;width:500.59999999999997px;height:15.88px;background:#f6f6f6"></div>
<div class="abs" style="left:132.2px;top:576.84px;width:500.59999999999997px;height:15.88px;background:#ffffff"></div>
<div class="abs" style="left:132.2px;top:592.72px;width:500.59999999999997px;height:15.88px;background:#f6f6f6"></div>
<div class="abs" style="left:189.0px;top:354.8px;width:1px;height:253.8px;background:#f2f2f2"></div>
<div class="abs" style="left:246.0px;top:354.8px;width:1px;height:253.8px;background:#f2f2f2"></div>
<div class="abs" style="left:298.3px;top:354.8px;width:1px;height:253.8px;background:#f2f2f2"></div>
<div class="abs" style="left:394.6px;top:354.8px;width:1px;height:253.8px;background:#f2f2f2"></div>
<div class="abs" style="left:436.4px;top:354.8px;width:1px;height:253.8px;background:#f2f2f2"></div>
<div class="abs" style="left:477.9px;top:354.8px;width:1px;height:253.8px;background:#f2f2f2"></div>
<div class="abs" style="left:576.1px;top:354.8px;width:1px;height:253.8px;background:#f2f2f2"></div>
<div class="abs" style="left:132.2px;top:608.1px;width:500.59999999999997px;height:0.6px;background:#f0f0f0"></div>
<div class="abs" style="left:132.2px;top:370px;width:500.59999999999997px;height:0.8px;background:#eeeeee"></div>
<div class="th" style="left:135.8px;top:341.0px;line-height:12px">常驻地区域</div>
<div class="th" style="left:159.5px;top:341.0px;width:80px;text-align:right;line-height:12px">访客数</div>
<div class="th" style="left:280.8px;top:341.0px;width:80px;text-align:center;line-height:12px">访客数占比</div>
<div class="th" style="left:350.2px;top:341.0px;width:80px;text-align:right;line-height:12px">访问次数</div>
<div class="th" style="left:466.7px;top:341.0px;width:80px;text-align:center;line-height:12px">访问次数占比</div>
<div class="th" style="left:545.4px;top:341.0px;width:80px;text-align:right;line-height:12px">人均访问次数</div>
<div class="tt b" style="left:122.6px;top:357.5px;width:80px;text-align:center;line-height:12px">合计</div>
<div class="tt" style="left:160.6px;top:357.2px;width:80px;text-align:right;line-height:12px">470</div>
<div class="tt dash" style="left:215.2px;top:357.2px;width:80px;text-align:right;line-height:12px">––</div>
<div class="tt dash" style="left:311.7px;top:357.2px;width:80px;text-align:right;line-height:12px">––</div>
<div class="tt" style="left:349.3px;top:357.2px;width:80px;text-align:right;line-height:12px">7,549</div>
<div class="tt dash" style="left:392.3px;top:357.2px;width:80px;text-align:right;line-height:12px">––</div>
<div class="tt dash" style="left:492.0px;top:357.2px;width:80px;text-align:right;line-height:12px">––</div>
<div class="tt" style="left:538.5px;top:357.2px;width:80px;text-align:right;line-height:12px">16</div>
<div class="td" style="left:135.8px;top:372.8px;line-height:12px">中国地区部</div>
<div class="tn" style="left:159.5px;top:371.1px;width:80px;text-align:right;line-height:12px">389</div>
<div class="tp" style="left:213.2px;top:372.8px;width:80px;text-align:right;line-height:12px">82.77%</div>
<div class="abs" style="left:304.9px;top:374.8px;width:82.3px;height:8.4px;background:#e8890c"></div>
<div class="tn" style="left:347.9px;top:371.1px;width:80px;text-align:right;line-height:12px">7,026</div>
<div class="tp" style="left:391.6px;top:372.8px;width:80px;text-align:right;line-height:12px">93.07%</div>
<div class="abs" style="left:484.8px;top:374.8px;width:82.7px;height:8.4px;background:#1a9fd4"></div>
<div class="ta" style="left:537.8px;top:371.1px;width:80px;text-align:right;line-height:12px">18</div>
<div class="td" style="left:135.8px;top:388.7px;line-height:12px">西欧地区部</div>
<div class="tn" style="left:159.5px;top:387.0px;width:80px;text-align:right;line-height:12px">21</div>
<div class="tp" style="left:213.2px;top:388.7px;width:80px;text-align:right;line-height:12px">4.47%</div>
<div class="abs" style="left:304.9px;top:390.7px;width:13.75px;height:8.4px;background:#e8890c"></div>
<div class="tn" style="left:347.9px;top:387.0px;width:80px;text-align:right;line-height:12px">127</div>
<div class="tp" style="left:391.6px;top:388.7px;width:80px;text-align:right;line-height:12px">1.68%</div>
<div class="abs" style="left:484.8px;top:390.7px;width:13.75px;height:8.4px;background:#1a9fd4"></div>
<div class="ta" style="left:537.8px;top:387.0px;width:80px;text-align:right;line-height:12px">6</div>
<div class="td" style="left:135.8px;top:404.6px;line-height:12px">东北欧地区部</div>
<div class="tn" style="left:159.5px;top:402.9px;width:80px;text-align:right;line-height:12px">17</div>
<div class="tp" style="left:213.2px;top:404.6px;width:80px;text-align:right;line-height:12px">3.62%</div>
<div class="abs" style="left:304.9px;top:406.6px;width:7.5px;height:8.4px;background:#e8890c"></div>
<div class="tn" style="left:347.9px;top:402.9px;width:80px;text-align:right;line-height:12px">99</div>
<div class="tp" style="left:391.6px;top:404.6px;width:80px;text-align:right;line-height:12px">1.31%</div>
<div class="abs" style="left:484.8px;top:406.6px;width:8px;height:8.4px;background:#1a9fd4"></div>
<div class="ta" style="left:537.8px;top:402.9px;width:80px;text-align:right;line-height:12px">6</div>
<div class="td" style="left:135.8px;top:420.5px;line-height:12px">拉美地区部</div>
<div class="tn" style="left:159.5px;top:418.8px;width:80px;text-align:right;line-height:12px">16</div>
<div class="tp" style="left:213.2px;top:420.5px;width:80px;text-align:right;line-height:12px">3.40%</div>
<div class="abs" style="left:304.9px;top:422.5px;width:4.25px;height:8.4px;background:#e8890c"></div>
<div class="tn" style="left:347.9px;top:418.8px;width:80px;text-align:right;line-height:12px">91</div>
<div class="tp" style="left:391.6px;top:420.5px;width:80px;text-align:right;line-height:12px">1.21%</div>
<div class="abs" style="left:484.8px;top:422.5px;width:4.25px;height:8.4px;background:#1a9fd4"></div>
<div class="ta" style="left:537.8px;top:418.8px;width:80px;text-align:right;line-height:12px">6</div>
<div class="td" style="left:135.8px;top:436.4px;line-height:12px">中东地区部</div>
<div class="tn" style="left:159.5px;top:434.7px;width:80px;text-align:right;line-height:12px">7</div>
<div class="tp" style="left:213.2px;top:436.4px;width:80px;text-align:right;line-height:12px">1.49%</div>
<div class="abs" style="left:304.9px;top:438.4px;width:7px;height:8.4px;background:#e8890c"></div>
<div class="tn" style="left:347.9px;top:434.7px;width:80px;text-align:right;line-height:12px">33</div>
<div class="tp" style="left:391.6px;top:436.4px;width:80px;text-align:right;line-height:12px">0.44%</div>
<div class="abs" style="left:484.8px;top:438.4px;width:7px;height:8.4px;background:#1a9fd4"></div>
<div class="ta" style="left:537.8px;top:434.7px;width:80px;text-align:right;line-height:12px">5</div>
<div class="td" style="left:135.8px;top:452.2px;line-height:12px">东南非地区部</div>
<div class="tn" style="left:159.5px;top:450.5px;width:80px;text-align:right;line-height:12px">4</div>
<div class="tp" style="left:213.2px;top:452.2px;width:80px;text-align:right;line-height:12px">0.85%</div>
<div class="abs" style="left:304.9px;top:454.2px;width:4.25px;height:8.4px;background:#e8890c"></div>
<div class="tn" style="left:347.9px;top:450.5px;width:80px;text-align:right;line-height:12px">24</div>
<div class="tp" style="left:391.6px;top:452.2px;width:80px;text-align:right;line-height:12px">0.32%</div>
<div class="abs" style="left:484.8px;top:454.2px;width:4.25px;height:8.4px;background:#1a9fd4"></div>
<div class="ta" style="left:537.8px;top:450.5px;width:80px;text-align:right;line-height:12px">6</div>
<div class="td" style="left:135.8px;top:468.1px;line-height:12px">俄罗斯地区部</div>
<div class="tn" style="left:159.5px;top:466.4px;width:80px;text-align:right;line-height:12px">3</div>
<div class="tp" style="left:213.2px;top:468.1px;width:80px;text-align:right;line-height:12px">0.64%</div>
<div class="abs" style="left:304.9px;top:470.1px;width:2.25px;height:8.4px;background:#e8890c"></div>
<div class="tn" style="left:347.9px;top:466.4px;width:80px;text-align:right;line-height:12px">29</div>
<div class="tp" style="left:391.6px;top:468.1px;width:80px;text-align:right;line-height:12px">0.38%</div>
<div class="abs" style="left:484.8px;top:470.1px;width:2.5px;height:8.4px;background:#1a9fd4"></div>
<div class="ta" style="left:537.8px;top:466.4px;width:80px;text-align:right;line-height:12px">10</div>
<div class="td" style="left:135.8px;top:484.0px;line-height:12px">东南亚地区部</div>
<div class="tn" style="left:159.5px;top:482.3px;width:80px;text-align:right;line-height:12px">3</div>
<div class="tp" style="left:213.2px;top:484.0px;width:80px;text-align:right;line-height:12px">0.43%</div>
<div class="abs" style="left:304.9px;top:486.0px;width:2.25px;height:8.4px;background:#e8890c"></div>
<div class="tn" style="left:347.9px;top:482.3px;width:80px;text-align:right;line-height:12px">9</div>
<div class="tp" style="left:391.6px;top:484.0px;width:80px;text-align:right;line-height:12px">0.12%</div>
<div class="abs" style="left:484.8px;top:486.0px;width:2.5px;height:8.4px;background:#1a9fd4"></div>
<div class="ta" style="left:537.8px;top:482.3px;width:80px;text-align:right;line-height:12px">3</div>
<div class="td" style="left:135.8px;top:499.9px;line-height:12px">北非地区部</div>
<div class="tn" style="left:159.5px;top:498.2px;width:80px;text-align:right;line-height:12px">2</div>
<div class="tp" style="left:213.2px;top:499.9px;width:80px;text-align:right;line-height:12px">0.43%</div>
<div class="abs" style="left:304.9px;top:501.9px;width:1.5px;height:8.4px;background:#e8890c"></div>
<div class="tn" style="left:347.9px;top:498.2px;width:80px;text-align:right;line-height:12px">16</div>
<div class="tp" style="left:391.6px;top:499.9px;width:80px;text-align:right;line-height:12px">0.21%</div>
<div class="abs" style="left:484.8px;top:501.9px;width:1.75px;height:8.4px;background:#1a9fd4"></div>
<div class="ta" style="left:537.8px;top:498.2px;width:80px;text-align:right;line-height:12px">8</div>
<div class="td" style="left:135.8px;top:515.8px;line-height:12px">西非地区部</div>
<div class="tn" style="left:159.5px;top:514.1px;width:80px;text-align:right;line-height:12px">2</div>
<div class="tp" style="left:213.2px;top:515.8px;width:80px;text-align:right;line-height:12px">0.21%</div>
<div class="abs" style="left:304.9px;top:517.8px;width:1.5px;height:8.4px;background:#e8890c"></div>
<div class="tn" style="left:347.9px;top:514.1px;width:80px;text-align:right;line-height:12px">22</div>
<div class="tp" style="left:391.6px;top:515.8px;width:80px;text-align:right;line-height:12px">0.29%</div>
<div class="abs" style="left:484.8px;top:517.8px;width:1.75px;height:8.4px;background:#1a9fd4"></div>
<div class="ta" style="left:537.8px;top:514.1px;width:80px;text-align:right;line-height:12px">11</div>
<div class="td" style="left:135.8px;top:531.6px;line-height:12px">美国代表处</div>
<div class="tn" style="left:159.5px;top:529.9px;width:80px;text-align:right;line-height:12px">2</div>
<div class="tp" style="left:213.2px;top:531.6px;width:80px;text-align:right;line-height:12px">0.21%</div>
<div class="abs" style="left:304.9px;top:533.6px;width:1.5px;height:8.4px;background:#e8890c"></div>
<div class="tn" style="left:347.9px;top:529.9px;width:80px;text-align:right;line-height:12px">6</div>
<div class="tp" style="left:391.6px;top:531.6px;width:80px;text-align:right;line-height:12px">0.08%</div>
<div class="abs" style="left:484.8px;top:533.6px;width:1.75px;height:8.4px;background:#1a9fd4"></div>
<div class="ta" style="left:537.8px;top:529.9px;width:80px;text-align:right;line-height:12px">3</div>
<div class="td" style="left:135.8px;top:547.5px;line-height:12px">中亚地区部</div>
<div class="tn" style="left:159.5px;top:545.8px;width:80px;text-align:right;line-height:12px">1</div>
<div class="tp" style="left:213.2px;top:547.5px;width:80px;text-align:right;line-height:12px">0.21%</div>
<div class="tn" style="left:347.9px;top:545.8px;width:80px;text-align:right;line-height:12px">20</div>
<div class="tp" style="left:391.6px;top:547.5px;width:80px;text-align:right;line-height:12px">0.26%</div>
<div class="ta" style="left:537.8px;top:545.8px;width:80px;text-align:right;line-height:12px">20</div>
<div class="td" style="left:135.8px;top:563.4px;line-height:12px">加拿大地区部</div>
<div class="tn" style="left:159.5px;top:561.7px;width:80px;text-align:right;line-height:12px">1</div>
<div class="tp" style="left:213.2px;top:563.4px;width:80px;text-align:right;line-height:12px">0.21%</div>
<div class="tn" style="left:347.9px;top:561.7px;width:80px;text-align:right;line-height:12px">14</div>
<div class="tp" style="left:391.6px;top:563.4px;width:80px;text-align:right;line-height:12px">0.19%</div>
<div class="ta" style="left:537.8px;top:561.7px;width:80px;text-align:right;line-height:12px">14</div>
<div class="td" style="left:135.8px;top:579.3px;line-height:12px">南太平洋地区部</div>
<div class="tn" style="left:159.5px;top:577.6px;width:80px;text-align:right;line-height:12px">1</div>
<div class="tp" style="left:213.2px;top:579.3px;width:80px;text-align:right;line-height:12px">0.21%</div>
<div class="tn" style="left:347.9px;top:577.6px;width:80px;text-align:right;line-height:12px">29</div>
<div class="tp" style="left:391.6px;top:579.3px;width:80px;text-align:right;line-height:12px">0.38%</div>
<div class="ta" style="left:537.8px;top:577.6px;width:80px;text-align:right;line-height:12px">29</div>
<div class="td" style="left:135.8px;top:595.2px;line-height:12px">日本代表处</div>
<div class="tn" style="left:159.5px;top:593.5px;width:80px;text-align:right;line-height:12px">1</div>
<div class="tp" style="left:213.2px;top:595.2px;width:80px;text-align:right;line-height:12px">0.21%</div>
<div class="tn" style="left:347.9px;top:593.5px;width:80px;text-align:right;line-height:12px">4</div>
<div class="tp" style="left:391.6px;top:595.2px;width:80px;text-align:right;line-height:12px">0.05%</div>
<div class="ta" style="left:537.8px;top:593.5px;width:80px;text-align:right;line-height:12px">4</div>
</body></html>
